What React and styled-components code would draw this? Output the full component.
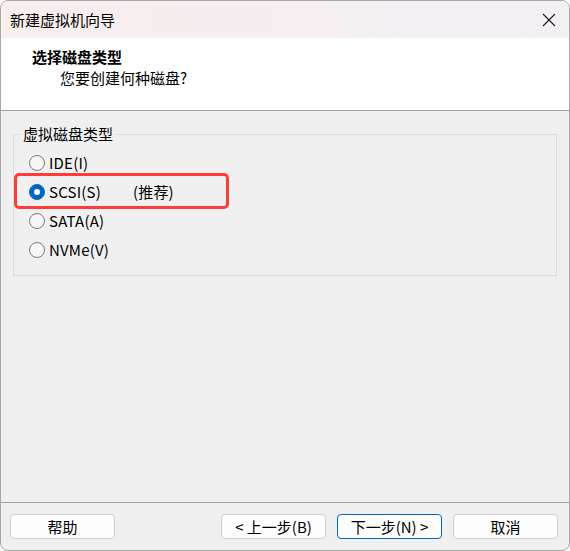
import React from 'react'
import styled, { createGlobalStyle } from 'styled-components'

const FONT = '"Noto Sans CJK SC", "Noto Sans", sans-serif'

const GlobalStyle = createGlobalStyle`
  html, body {
    margin: 0;
    padding: 0;
    background: #ffffff;
  }
  body {
    font-family: ${FONT};
    font-size: 15px;
    color: #000000;
  }
`

const Window = styled.div`
  width: 570px;
  height: 551px;
  box-sizing: border-box;
  border: 1px solid #a8a8a8;
  border-radius: 8px;
  overflow: hidden;
  display: flex;
  flex-direction: column;
  background: #f0f0f0;
`

const TitleBar = styled.div`
  height: 37px;
  flex: none;
  display: flex;
  align-items: center;
  justify-content: space-between;
  padding: 0 13px 0 9px;
  background: linear-gradient(90deg, #f7eeee, #f3f0f4);
  font-size: 15px;
  line-height: 20px;
`

const CloseButton = styled.svg`
  width: 14px;
  height: 14px;
  display: block;
`

const Header = styled.div`
  flex: none;
  box-sizing: border-box;
  height: 73px;
  background: #ffffff;
  border-bottom: 1px solid #a0a0a0;
  padding: 9px 0 0 31px;
`

const HeaderTitle = styled.div`
  font-weight: bold;
  line-height: 20px;
`

const HeaderSub = styled.div`
  line-height: 20px;
  padding-left: 28px;
  margin-top: 1px;
`

const Body = styled.div`
  flex: 1;
  padding: 13px 12px 0 12px;
`

const Group = styled.fieldset`
  margin: 0;
  padding: 4px 0 11px 15px;
  border: 1px solid #dcdcdc;
  min-width: 0;
`

const Legend = styled.legend`
  margin-left: -8px;
  padding: 0 2px;
  line-height: 20px;
`

const Row = styled.label`
  position: relative;
  height: 29px;
  display: flex;
  align-items: center;
  line-height: 20px;
  letter-spacing: 0.2px;
  ${p => p.highlighted ? `
    &::after {
      content: '';
      position: absolute;
      left: -15px;
      top: -4px;
      width: 215px;
      height: 36px;
      box-sizing: border-box;
      border: 3px solid #ff3b3b;
      border-radius: 5px;
    }
  ` : ''}
`

const Radio = styled.span`
  width: 16px;
  height: 16px;
  box-sizing: border-box;
  border-radius: 50%;
  flex: none;
  margin-right: 4px;
  display: flex;
  align-items: center;
  justify-content: center;
  ${p => p.checked ? `
    background: #0067c0;
    border: 1px solid #0067c0;
  ` : `
    background: #f7f7f7;
    border: 1px solid #7a7a7a;
  `}
`

const RadioDot = styled.span`
  width: 6px;
  height: 6px;
  border-radius: 50%;
  background: #ffffff;
`

const Note = styled.span`
  margin-left: 32px;
`

const Footer = styled.div`
  height: 48px;
  flex: none;
  box-sizing: border-box;
  border-top: 1px solid #a0a0a0;
  padding: 11px 11px 0 9px;
  display: flex;
  align-items: flex-start;
  gap: 11px;
`

const Spacer = styled.div`
  flex: 1;
`

const Button = styled.button`
  width: 105px;
  height: 25px;
  box-sizing: border-box;
  padding: 0;
  background: #fdfdfd;
  border: 1px solid ${p => p.primary ? '#0067c0' : '#d0d0d0'};
  border-radius: 4px;
  font-family: ${FONT};
  font-size: 15px;
  line-height: 20px;
  color: #000000;
  display: flex;
  align-items: center;
  justify-content: center;
`

const options = [
  { label: 'IDE(I)' },
  { label: 'SCSI(S)', checked: true, note: '(推荐)' },
  { label: 'SATA(A)' },
  { label: 'NVMe(V)' }
]

export default function App () {
  return (
    <>
      <GlobalStyle />
      <Window>
        <TitleBar>
          <span>新建虚拟机向导</span>
          <CloseButton viewBox='0 0 14 14'>
            <path d='M1 1 L13 13 M13 1 L1 13' stroke='#1a1a1a' strokeWidth='1.1' fill='none' />
          </CloseButton>
        </TitleBar>
        <Header>
          <HeaderTitle>选择磁盘类型</HeaderTitle>
          <HeaderSub>您要创建何种磁盘?</HeaderSub>
        </Header>
        <Body>
          <Group>
            <Legend>虚拟磁盘类型</Legend>
            {options.map(o => (
              <Row key={o.label} highlighted={o.checked}>
                <Radio checked={o.checked}>{o.checked && <RadioDot />}</Radio>
                <span>{o.label}</span>
                {o.note && <Note>{o.note}</Note>}
              </Row>
            ))}
          </Group>
        </Body>
        <Footer>
          <Button>帮助</Button>
          <Spacer />
          <Button>&lt; 上一步(B)</Button>
          <Button primary>下一步(N) &gt;</Button>
          <Button>取消</Button>
        </Footer>
      </Window>
    </>
  )
}
